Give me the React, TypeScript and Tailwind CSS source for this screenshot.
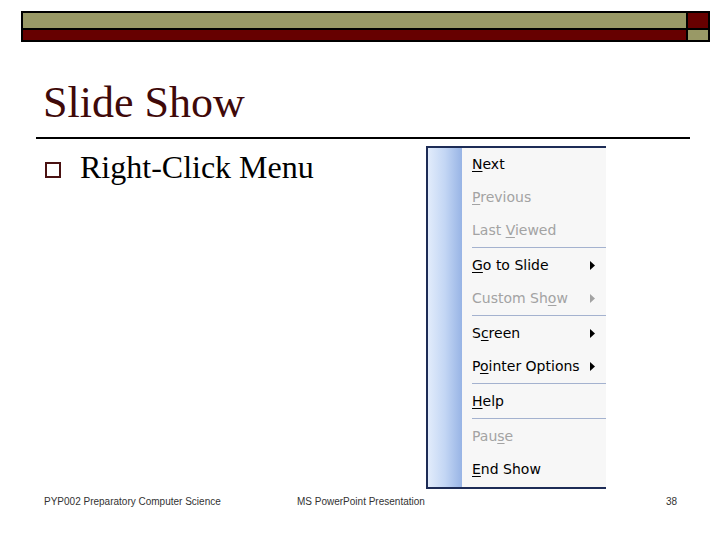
import React from 'react';

type Item = {
  label: string;
  // index of the underlined mnemonic letter
  key: number;
  disabled?: boolean;
  submenu?: boolean;
};

const groups: Item[][] = [
  [
    { label: 'Next', key: 0 },
    { label: 'Previous', key: 0, disabled: true },
    { label: 'Last Viewed', key: 5, disabled: true },
  ],
  [
    { label: 'Go to Slide', key: 0, submenu: true },
    { label: 'Custom Show', key: 9, disabled: true, submenu: true },
  ],
  [
    { label: 'Screen', key: 1, submenu: true },
    { label: 'Pointer Options', key: 1, submenu: true },
  ],
  [{ label: 'Help', key: 0 }],
  [
    { label: 'Pause', key: 3, disabled: true },
    { label: 'End Show', key: 0 },
  ],
];

function MenuRow({ item }: { item: Item }) {
  const { label, key, disabled, submenu } = item;
  return (
    <div
      className={`flex h-[33px] items-center justify-between pl-[10px] pr-[10px] ${
        disabled ? 'text-[#a3a3a3]' : 'text-black'
      }`}
    >
      <span>
        {label.slice(0, key)}
        <span className="underline underline-offset-2">{label.charAt(key)}</span>
        {label.slice(key + 1)}
      </span>
      {submenu && (
        <svg width="5" height="9" viewBox="0 0 5 9" className="mr-[1px]">
          <path d="M0 0 L5 4.5 L0 9 Z" fill={disabled ? '#a3a3a3' : '#000'} />
        </svg>
      )}
    </div>
  );
}

function SlideMenu() {
  return (
    <div className="flex h-[343px] w-[180px] border-y-2 border-l-2 border-[#1d2c56] bg-[#f7f7f7]">
      {/* blue side strip */}
      <div className="w-[34px] bg-gradient-to-r from-[#e2ecfb] via-[#c3d6f4] to-[#98b4e5]" />
      <div
        className="flex-1 text-[14px]"
        style={{ fontFamily: '"DejaVu Sans", Tahoma, sans-serif' }}
      >
        {groups.map((g, i) => (
          <div key={i}>
            {i > 0 && <div className="ml-[10px] h-[2px] border-t border-[#a4b2cf]" />}
            {g.map((item) => (
              <MenuRow key={item.label} item={item} />
            ))}
          </div>
        ))}
      </div>
    </div>
  );
}

export default function App() {
  return (
    <div
      className="relative h-[540px] w-[720px] overflow-hidden bg-white"
      style={{ fontFamily: '"Liberation Serif", "Times New Roman", serif' }}
    >
      {/* header bars */}
      <div className="ml-[21px] mt-[11px] flex h-[31px] w-[689px] border-2 border-black">
        <div className="flex flex-1 flex-col">
          <div className="h-[15px] bg-[#999966]" />
          <div className="h-[2px] bg-black" />
          <div className="flex-1 bg-[#660000]" />
        </div>
        <div className="w-[2px] bg-black" />
        <div className="flex w-[20px] flex-col">
          <div className="h-[15px] bg-[#660000]" />
          <div className="h-[2px] bg-black" />
          <div className="flex-1 bg-[#999966]" />
        </div>
      </div>

      {/* title */}
      <h1 className="ml-[43px] mt-[39px] text-[44px] leading-none text-[#3f0909]">Slide Show</h1>
      <div className="ml-[36px] mt-[12px] h-[2px] w-[654px] bg-black" />

      {/* body */}
      <div className="mt-[7px] flex">
        <div className="flex w-[426px] items-start pl-[45px] pt-[5px]">
          <div className="mt-[11px] h-[16px] w-[16px] border-2 border-[#4a1212]" />
          <span className="ml-[19px] text-[32px] leading-none text-black">Right-Click Menu</span>
        </div>
        <SlideMenu />
      </div>

      {/* footer */}
      <div
        className="mt-[8px] flex text-[10px] leading-none text-[#333]"
        style={{ fontFamily: '"Liberation Sans", Arial, sans-serif' }}
      >
        <span className="ml-[44px] w-[253px]">PYP002 Preparatory Computer Science</span>
        <span className="w-[369px]">MS PowerPoint Presentation</span>
        <span>38</span>
      </div>
    </div>
  );
}
